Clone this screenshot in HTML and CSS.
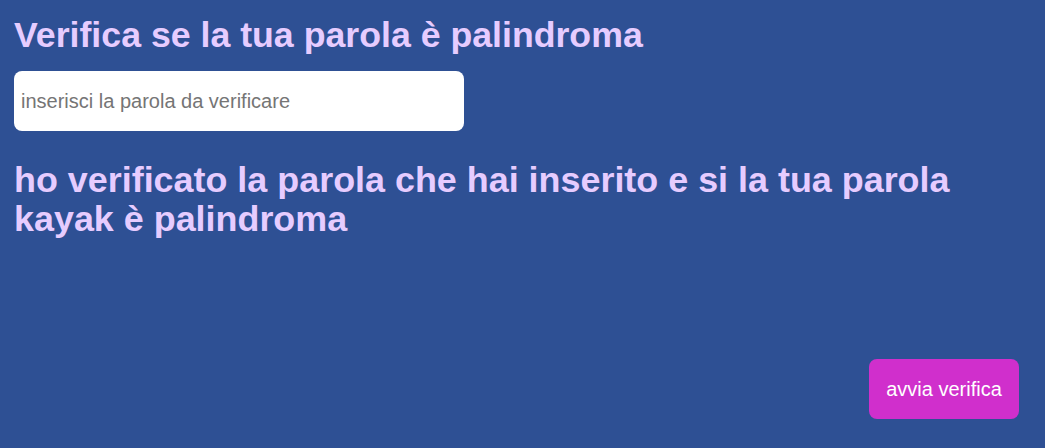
FILE: index.html
```html
<!DOCTYPE html>
<html lang="it">
<head>
<meta charset="utf-8">
<link rel="stylesheet" href="styles.css">
</head>
<body>
<main class="page">
  <h1 class="title">Verifica se la tua parola è palindroma</h1>
  <input class="word-input" type="text" placeholder="inserisci la parola da verificare">
  <h2 class="result">ho verificato la parola che hai inserito e si la tua parola kayak è palindroma</h2>
  <div class="actions">
    <button class="verify-btn" type="button">avvia verifica</button>
  </div>
</main>
</body>
</html>
```

FILE: styles.css
```css
html, body {
  margin: 0;
  padding: 0;
  background: #2e5094;
  height: 100%;
}
.page {
  box-sizing: border-box;
  height: 448px;
  padding: 14px 26px 29px 14px;
  display: flex;
  flex-direction: column;
  font-family: "Liberation Sans", Arial, sans-serif;
}
.title {
  margin: 0;
  font-size: 35.7px;
  line-height: 42px;
  font-weight: bold;
  color: #e6ccff;
}
.word-input {
  margin-top: 15px;
  width: 450px;
  height: 60px;
  box-sizing: border-box;
  border: none;
  border-radius: 8px;
  padding: 0 7px;
  font-family: "Liberation Sans", Arial, sans-serif;
  font-size: 20px;
  background: #fff;
  outline: none;
}
.word-input::placeholder {
  color: #757575;
}
.result {
  margin: 30px 0 0 0;
  font-size: 35.9px;
  line-height: 39px;
  font-weight: bold;
  color: #e6ccff;
}
.actions {
  margin-top: auto;
  display: flex;
  justify-content: flex-end;
}
.verify-btn {
  width: 150px;
  height: 60px;
  border: none;
  border-radius: 8px;
  background: #d02fcc;
  color: #fff;
  font-family: "Liberation Sans", Arial, sans-serif;
  font-size: 20px;
  cursor: pointer;
}
```
